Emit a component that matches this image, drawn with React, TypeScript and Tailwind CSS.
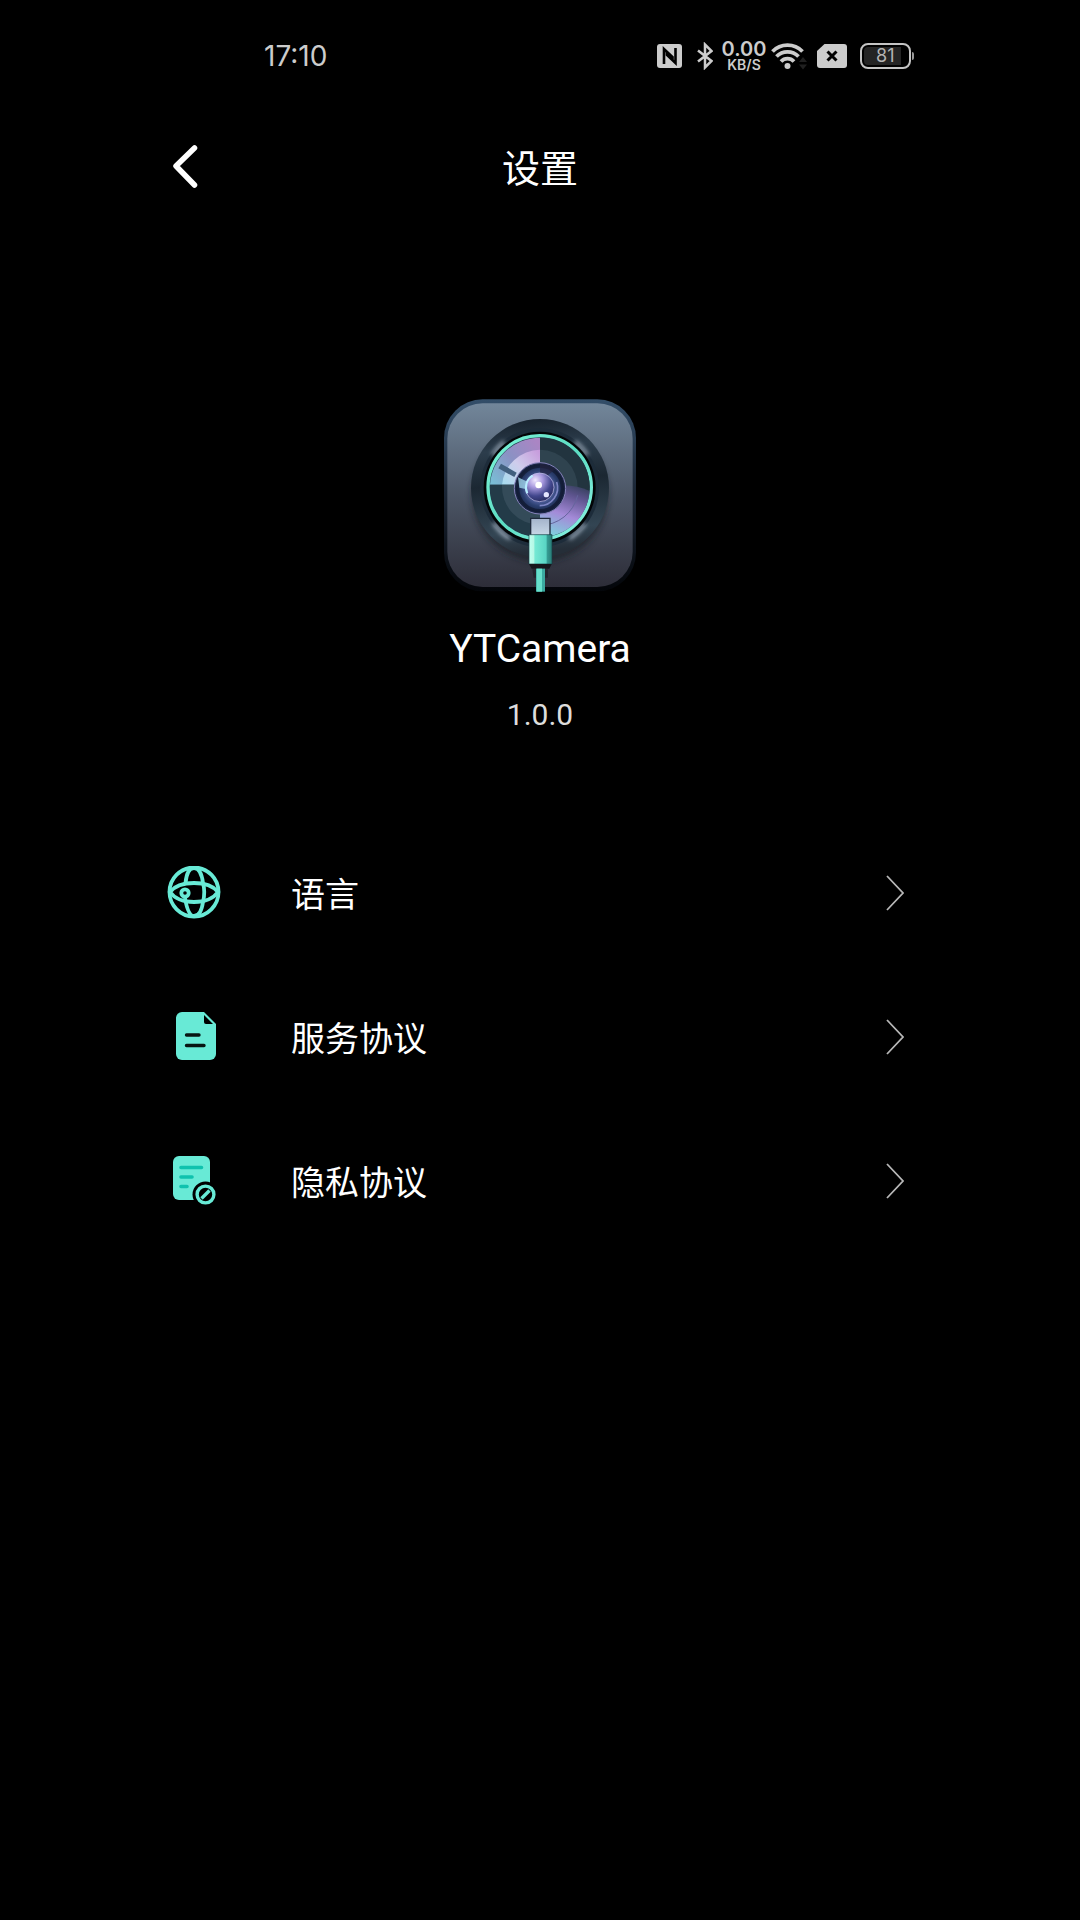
import type { ReactNode } from "react";

function StatusBar() {
  return (
    <div className="flex items-center justify-between pt-8 pr-[166px] pl-[264px] font-['Inter',sans-serif] text-[#cccccc]">
      <time className="text-[28px] leading-12">17:10</time>
      <div className="flex h-12 items-center">
        <svg className="h-6 w-[26px]" viewBox="0 0 26 24" aria-label="NFC">
          <rect width="25" height="24" rx="3" fill="currentColor" />
          <path d="M7 20V5l8.500 8v3M18.500 4v15L10 11V8" fill="none" stroke="#000" strokeWidth="2.600" />
        </svg>
        <svg className="ml-[14px] h-7 w-4" viewBox="0 0 16 28" aria-label="Bluetooth">
          <path d="M1 8.500 14.500 19 8 25.500V2.500L14.500 9 1 19.500" fill="none" stroke="currentColor" strokeWidth="2.500" />
        </svg>
        <div className="ml-2 flex w-[46px] flex-col items-center pt-[2px] font-semibold">
          <span className="text-[20px] leading-4">0.00</span>
          <span className="text-[14px] leading-4">KB/S</span>
        </div>
        <svg className="ml-1 h-7 w-9" viewBox="0 0 36 28" aria-label="Wi-Fi">
          <g fill="none" stroke="currentColor" strokeWidth="3.800">
            <path d="M1.500 9.500a21 21 0 0 1 30 0" />
            <path d="M5.500 14.500a15.500 15.500 0 0 1 22 0" />
            <path d="M10 19.500a9 9 0 0 1 13 0" />
          </g>
          <circle cx="16.500" cy="24" r="3" fill="currentColor" />
          <path d="m28 20 4-5 4 5zM28 22.500h8l-4 5z" fill="#202020" />
        </svg>
        <svg className="ml-[10px] h-6 w-[30px]" viewBox="0 0 30 24" aria-label="No SIM">
          <path d="M7.500 0H27a3 3 0 0 1 3 3v18a3 3 0 0 1-3 3H3a3 3 0 0 1-3-3V7z" fill="currentColor" />
          <path d="m10.500 7.500 9 9m0-9-9 9" stroke="#000" strokeWidth="3" />
        </svg>
        <div className="ml-[13px] flex items-center">
          <div className="h-[26px] w-[51px] rounded-lg border-2 border-[#c4c4c4] p-[2px]">
            <div className="h-full w-[37px] rounded-l bg-[#242424] pl-3 text-[18px] leading-[18px] text-[#b4b4b4]">81</div>
          </div>
          <div className="ml-px h-2 w-[2px] rounded-r bg-[#999999]" />
        </div>
      </div>
    </div>
  );
}

function AppLogo() {
  return (
    <svg className="h-[194px] w-48" viewBox="42 41 576 582" role="img" aria-label="YTCamera">
      <defs>
        <linearGradient id="edge" x1="0" y1="0" x2="0" y2="1">
          <stop offset="0" stopColor="#334e69" />
          <stop offset="0.45" stopColor="#1c2838" />
          <stop offset="1" stopColor="#030509" />
        </linearGradient>
        <linearGradient id="body" x1="0" y1="0" x2="0" y2="1">
          <stop offset="0" stopColor="#72869a" />
          <stop offset="0.5" stopColor="#4b5565" />
          <stop offset="1" stopColor="#2d2d38" />
        </linearGradient>
        <linearGradient id="ring" x1="0" y1="0" x2="0.1" y2="1">
          <stop offset="0" stopColor="#151f2a" />
          <stop offset="0.25" stopColor="#2c3d4c" />
          <stop offset="0.5" stopColor="#1b2732" />
          <stop offset="0.85" stopColor="#334553" />
          <stop offset="1" stopColor="#252e38" />
        </linearGradient>
        <linearGradient id="teal" x1="0" y1="0" x2="1" y2="1">
          <stop offset="0" stopColor="#7df5d8" />
          <stop offset="0.5" stopColor="#5cdcc2" />
          <stop offset="1" stopColor="#8df3e4" />
        </linearGradient>
        <linearGradient id="pink" gradientUnits="userSpaceOnUse" x1="330" y1="180" x2="190" y2="300">
          <stop offset="0" stopColor="#ab85c4" />
          <stop offset="0.5" stopColor="#8a92c4" />
          <stop offset="1" stopColor="#79bfd6" />
        </linearGradient>
        <linearGradient id="pinkInner" gradientUnits="userSpaceOnUse" x1="330" y1="200" x2="220" y2="300">
          <stop offset="0" stopColor="#c79bdc" />
          <stop offset="0.5" stopColor="#cfcdec" />
          <stop offset="1" stopColor="#a6dcef" />
        </linearGradient>
        <linearGradient id="violet" gradientUnits="userSpaceOnUse" x1="440" y1="290" x2="380" y2="455">
          <stop offset="0" stopColor="#2f3c55" />
          <stop offset="0.25" stopColor="#5f5590" />
          <stop offset="0.6" stopColor="#a48ad8" />
          <stop offset="1" stopColor="#7fd0dd" />
        </linearGradient>
        <radialGradient id="center">
          <stop offset="0.4" stopColor="#6470b4" />
          <stop offset="0.7" stopColor="#2b3f70" />
          <stop offset="1" stopColor="#18223f" />
        </radialGradient>
        <radialGradient id="ball" cx="0.35" cy="0.25" r="0.85">
          <stop offset="0" stopColor="#f0e8ff" />
          <stop offset="0.3" stopColor="#a99adf" />
          <stop offset="0.65" stopColor="#42478d" />
          <stop offset="1" stopColor="#202452" />
        </radialGradient>
        <linearGradient id="metal" x1="0" y1="0" x2="0" y2="1">
          <stop offset="0" stopColor="#a4b3cb" />
          <stop offset="1" stopColor="#cad9e8" />
        </linearGradient>
        <linearGradient id="plug">
          <stop offset="0" stopColor="#c0fff0" />
          <stop offset="0.22" stopColor="#b5f7e5" />
          <stop offset="0.25" stopColor="#75e9d4" />
          <stop offset="0.75" stopColor="#59d4c4" />
          <stop offset="0.78" stopColor="#379e95" />
          <stop offset="1" stopColor="#287b76" />
        </linearGradient>
        <filter id="soft" x="-20%" y="-20%" width="140%" height="140%">
          <feGaussianBlur stdDeviation="10" />
        </filter>
        <filter id="glow" x="-50%" y="-50%" width="200%" height="200%">
          <feGaussianBlur stdDeviation="6" />
        </filter>
      </defs>
      <rect x="42" y="42" width="576" height="576" rx="116" fill="url(#edge)" />
      <rect x="52" y="54" width="556" height="551" rx="106" fill="url(#body)" />
      <ellipse cx="330" cy="327" rx="205" ry="203" fill="#161b24" opacity="0.6" filter="url(#soft)" />
      <circle cx="330" cy="308" r="207" fill="url(#ring)" />
      <circle cx="329" cy="307" r="178" fill="#1d2c3a" />
      <g fill="none" stroke="#b3c2d2" strokeWidth="9" strokeLinecap="round" filter="url(#glow)">
        <path d="M190 206a172 172 0 0 1 30-34" />
        <path d="M438 172a172 172 0 0 1 32 34" />
        <path d="M193 416a172 172 0 0 0 44 42" />
        <path d="M421 458a172 172 0 0 0 42-40" />
      </g>
      <circle cx="329" cy="307" r="168" fill="#030507" />
      <circle cx="329" cy="306" r="155" fill="#22384a" stroke="url(#teal)" strokeWidth="10" />
      <path d="M330 298H180A150 150 0 0 1 330 157z" fill="url(#pink)" />
      <path d="M330 298H216A116 116 0 0 1 330 193z" fill="url(#pinkInner)" />
      <path d="m213 235 47 27-7 13-48-26z" fill="#415f7e" />
      <path d="M330 157A150 150 0 0 1 479 316L330 306z" fill="#22343f" />
      <path d="M330 193a114 114 0 0 1 113 115l-113-2z" fill="#2f434f" />
      <path d="M180 298h150v156A150 150 0 0 1 180 298z" fill="#233b48" />
      <path d="M216 298h114v121A115 115 0 0 1 216 298z" fill="#344b59" />
      <path d="m330 306 70-6q43 1 79 17A150 150 0 0 1 330 456z" fill="url(#violet)" />
      <path d="M443 330A116 116 0 0 1 330 420" fill="none" stroke="#65659d" strokeWidth="3" />
      <circle cx="330" cy="309" r="77" fill="url(#center)" stroke="#8582ba" strokeWidth="3" />
      <circle cx="330" cy="309" r="67" fill="none" stroke="#0b1227" strokeWidth="10" opacity="0.6" />
      <path d="m264 276 35 16-9 20-22-5z" fill="#a7def3" opacity="0.75" />
      <path d="M330 235q27 2 46 16l-46 40z" fill="#25243f" opacity="0.65" />
      <path d="M380 290a54 54 0 0 1-51 71" fill="none" stroke="#7d85c4" strokeWidth="5" />
      <circle cx="329" cy="306" r="43" fill="url(#ball)" stroke="#c9c6ef" strokeWidth="2" />
      <path d="M292 324a41 41 0 0 1 16-53" fill="none" stroke="#b6edff" strokeWidth="6" />
      <circle cx="326" cy="299" r="10" fill="#fff" />
      <circle cx="349" cy="328" r="8" fill="#e4e5ff" />
      <path d="M302 452v-53h58v53z" fill="url(#metal)" stroke="#202a3c" strokeWidth="4" />
      <path d="M297 448h69v88h-69z" fill="url(#plug)" stroke="#153d42" strokeWidth="2" />
      <path d="M297 536h68l-7 14h-53z" fill="#17171c" />
      <path d="M307 552h11v25h-7zM345 552h9v25h-9z" fill="#15161b" opacity="0.5" />
      <path d="M318 550h27v69h-27z" fill="#3baaa0" />
      <path d="M320 550h16v69h-16z" fill="#67dfcb" />
    </svg>
  );
}

const globe = (
  <svg className="h-[54px] w-[54px]" viewBox="0 0 54 54" fill="none" stroke="#68ead6" strokeWidth="3.800" aria-hidden="true">
    <circle cx="27" cy="26" r="24.500" />
    <path d="M3 26Q10 17 27 17t24 9q-7 10-24 10T3 26z" />
    <path d="M18.500 17Q20 2 27 2t9 15q2.500 9 0 19-2 14-9 14-6 0-9-18" />
    <circle cx="18" cy="27" r="3.700" />
  </svg>
);

const documentIcon = (
  <svg className="ml-1 h-[50px] w-10" viewBox="0 0 40 50" aria-hidden="true">
    <path d="M6 0h22l12 12v30a6 6 0 0 1-6 6H6a6 6 0 0 1-6-6V6a6 6 0 0 1 6-6z" fill="#68ead6" />
    <path d="M28 3v7q0 2 2 2h7z" fill="#000" />
    <path d="M10.500 23H23M10.500 33.500H28" stroke="#071512" strokeWidth="3.400" strokeLinecap="round" />
  </svg>
);

const privacyIcon = (
  <svg className="h-[50px] w-11" viewBox="0 0 44 50" aria-hidden="true">
    <rect x="1" y="0" width="37" height="44" rx="6" fill="#68ead6" />
    <path d="M9 11.500H29.500M9 21H20M9 30.500H15" stroke="#0fc2ae" strokeWidth="3.600" strokeLinecap="round" />
    <circle cx="33.500" cy="38.500" r="13" fill="#000" />
    <circle cx="33.500" cy="38.500" r="8.400" fill="none" stroke="#68ead6" strokeWidth="3.400" />
    <path d="m29.500 42.500 8-8" stroke="#68ead6" strokeWidth="3.400" />
  </svg>
);

function SettingsRow({ icon, label }: { icon: ReactNode; label: string }) {
  return (
    <li>
      <button type="button" className="flex h-36 w-full items-center text-left">
        <span className="flex w-[54px] justify-center">{icon}</span>
        <span className="ml-[70px] grow pt-1 text-[34px] leading-12">{label}</span>
        <svg className="mr-[9px] h-9 w-[18px]" viewBox="0 0 18 36" fill="none" stroke="#b8b8b8" strokeWidth="1.800" aria-hidden="true">
          <path d="m1 1 16 17L1 35" />
        </svg>
      </button>
    </li>
  );
}

export default function App() {
  return (
    <div className="min-h-screen bg-black font-['Roboto','Noto_Sans_CJK_SC',sans-serif] text-white">
      <StatusBar />
      <header className="mt-[54px] grid h-16 grid-cols-[1fr_auto_1fr] items-center px-[167px]">
        <button type="button" aria-label="返回" className="justify-self-start pl-[5px]">
          <svg className="h-11 w-[26px]" viewBox="0 0 26 44" fill="none" stroke="#fff" strokeWidth="5.500" strokeLinecap="round" strokeLinejoin="round">
            <path d="M22.500 4 4 22l18.500 19" />
          </svg>
        </button>
        <h1 className="pt-[6px] text-[38px] leading-14">设置</h1>
      </header>
      <main className="px-[167px] pt-[201px]">
        <section className="flex flex-col items-center">
          <AppLogo />
          <h2 className="mt-8 text-[39px] leading-12">YTCamera</h2>
          <p className="mt-[22px] text-[30px] leading-10 text-[#dddddd]">1.0.0</p>
        </section>
        <ul className="mt-[86px]">
          <SettingsRow icon={globe} label="语言" />
          <SettingsRow icon={documentIcon} label="服务协议" />
          <SettingsRow icon={privacyIcon} label="隐私协议" />
        </ul>
      </main>
    </div>
  );
}
